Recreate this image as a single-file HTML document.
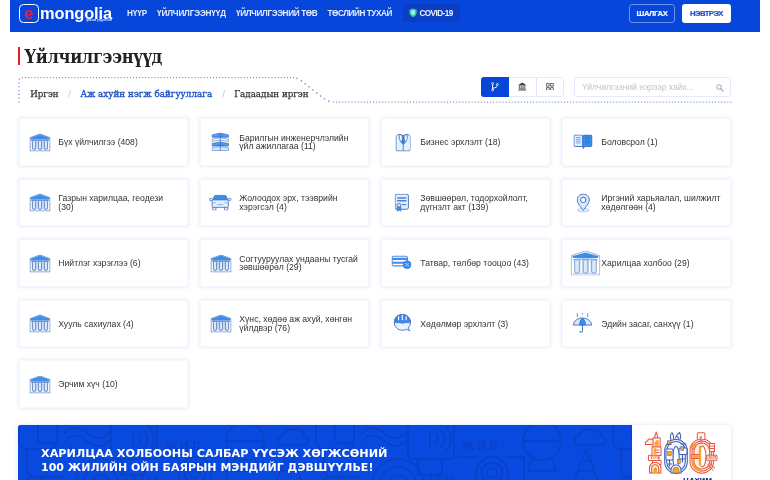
<!DOCTYPE html>
<html lang="mn">
<head>
<meta charset="utf-8">
<title>Үйлчилгээнүүд</title>
<style>
*{box-sizing:border-box;margin:0;padding:0}
html,body{width:770px;height:480px;overflow:hidden;background:#fff}
body{position:relative;font-family:"Liberation Sans",sans-serif;color:#333}
#root{position:absolute;left:0;top:0;width:770px;height:480px;overflow:hidden;will-change:transform}
.abs{position:absolute}
/* header */
#hdr{position:absolute;left:10px;top:0;width:749.5px;height:31.5px;background:#0746db}
#logo-box{position:absolute;left:8.6px;top:3.9px;width:20.2px;height:18.8px;border:1.8px solid #fff;border-radius:4.5px}
#logo-e{position:absolute;left:11.2px;top:1.6px;width:15px;text-align:center;font:bold 16.4px/22px "Liberation Sans",sans-serif;color:#e8213f}
#logo-t{position:absolute;left:30px;top:2.2px;font:bold 16.4px/22px "Liberation Sans",sans-serif;color:#fff;letter-spacing:-0.1px}
#logo-s{position:absolute;left:76px;top:18.8px;font:bold 3.1px/3.5px "Liberation Sans",sans-serif;color:#dfe6ff;white-space:nowrap;letter-spacing:0.1px}
.nav{position:absolute;top:9px;font:bold 8.2px/9px "Liberation Sans",sans-serif;color:#e4ebff;white-space:nowrap}
#covid{position:absolute;left:393px;top:4px;width:56.5px;height:18px;background:#0b3ec2;border-radius:2px}
#covid span{position:absolute;left:16.4px;top:5px;font:bold 8.2px/9px "Liberation Sans",sans-serif;color:#eef2ff;white-space:nowrap;letter-spacing:-0.54px}
#btn1{-webkit-text-stroke:0.2px #f2f5ff;position:absolute;left:619px;top:3.5px;width:46px;height:19px;border:1px solid #6d8ff0;border-radius:3px;text-align:center;font:bold 7.7px/17.4px "Liberation Sans",sans-serif;color:#f2f5ff;letter-spacing:-0.42px}
#btn2{-webkit-text-stroke:0.2px #2450cf;position:absolute;left:671.8px;top:3.5px;width:49.2px;height:19px;background:#fff;border-radius:3px;text-align:center;font:bold 7.7px/19.4px "Liberation Sans",sans-serif;color:#2450cf;letter-spacing:-0.5px}
/* title */
#tbar{position:absolute;left:18px;top:47px;width:2px;height:17.5px;background:#e0202c}
#title{position:absolute;left:24.5px;top:45px;font:bold 18px/24px "DejaVu Serif Condensed","DejaVu Serif","Liberation Serif",serif;color:#222;white-space:nowrap;letter-spacing:-0.3px}
/* tabs */
.tab{position:absolute;top:87.5px;font:9.7px/12px "DejaVu Serif Condensed","DejaVu Serif","Liberation Serif",serif;color:#333;white-space:nowrap;-webkit-text-stroke:0.25px #333}
.tab.act{color:#2355c8;-webkit-text-stroke:0.35px #2355c8;letter-spacing:0.06px}
.tab.sep{color:#b9bec9;-webkit-text-stroke:0}
/* toggles */
#tg{position:absolute;left:481px;top:77.3px;width:82.7px;height:19.5px;border:1px solid #e3ebfa;border-radius:3px;background:#fff}
#tg .on{position:absolute;left:-1px;top:-1px;width:28px;height:19.5px;background:#0746db;border-radius:3px 0 0 3px}
#tg .dv{position:absolute;left:54px;top:0;width:1px;height:17.5px;background:#dde7f8}
#srch{position:absolute;left:573.5px;top:77.3px;width:157.5px;height:19.5px;border:1px solid #e3ebfa;border-radius:3px;background:#fff}
#srch span{position:absolute;left:8px;top:4.2px;font:8.5px/10px "Liberation Sans",sans-serif;color:#bfc2c9;white-space:nowrap}
/* cards */
.card{position:absolute;width:169.5px;height:48.5px;background:#fff;border:1px solid #eef2fc;border-radius:3px;box-shadow:0 0 3.5px rgba(205,215,242,.42);transform:translate(0.5px,0.5px)}
.card .tx{position:absolute;left:38.8px;top:0;height:46.8px;width:126px;display:flex;align-items:center;font:8.65px/8.8px "Liberation Sans",sans-serif;color:#333;white-space:nowrap}
.card svg{position:absolute}
/* banner */
#ban{position:absolute;left:18.3px;top:425.3px;width:712.7px;height:60px;border-radius:3px;overflow:hidden;background:#fff;box-shadow:0 0 4px rgba(190,205,240,.6)}
#ban .bl{position:absolute;left:0;top:0;width:614.2px;height:60px;background:#084adf;overflow:hidden}
#ban .bt{position:absolute;left:22.6px;top:20.5px;font:bold 10.4px/14.1px "DejaVu Sans","Liberation Sans",sans-serif;color:#fff;white-space:nowrap}
</style>
</head>
<body>
<div id="root">
<!--ICONS-->
<svg width="0" height="0" style="position:absolute">
<defs>
<symbol id="i-bld" viewBox="0 0 21 18">
  <path d="M0.500 4.200 L10.500 0.500 L20.500 4.200 V17.500 H0.500 Z" fill="#fbfdff" stroke="#3f70ba" stroke-width="0.750" stroke-linejoin="round"/>
  <path d="M0.900 4.400 L10.500 0.900 L20.100 4.400 L19.600 6 H1.400 Z" fill="#3b8dec"/>
  <path d="M1.800 6.600 H19.200" stroke="#5c86c8" stroke-width="0.600"/>
  <path d="M2.200 6.800 Q2.900 7.200 2.900 8.300 V14.300 a1.650 1.650 0 0 0 3.300 0 V8.300 Q6.200 7.200 6.900 6.800 Z M8.150 6.800 Q8.850 7.200 8.850 8.300 V14.300 a1.650 1.650 0 0 0 3.300 0 V8.300 Q12.150 7.200 12.850 6.800 Z M14.100 6.800 Q14.800 7.200 14.800 8.300 V14.300 a1.650 1.650 0 0 0 3.300 0 V8.300 Q18.100 7.200 18.800 6.800 Z" fill="#dbe8fb" stroke="#3a68b4" stroke-width="0.800"/>
  <path d="M6.600 16.200 V9.700 a0.950 0.950 0 0 1 1.900 0 V16.200 M12.550 16.200 V9.700 a0.950 0.950 0 0 1 1.900 0 V16.200" fill="none" stroke="#6d97d6" stroke-width="0.400"/>
</symbol>
<symbol id="i-bldL" viewBox="0 0 30 25.500">
  <path d="M0.500 5.400 L15 0.400 L29.500 5.400 V25 H0.500 Z" fill="#fff" stroke="#4a78bd" stroke-width="0.600" stroke-linejoin="round"/>
  <path d="M1.600 5.900 L15 2.100 L28.400 5.900 L27.300 7.700 Q21 7.900 15.700 8.100 L15 7.500 L14.300 8.100 Q9 7.900 2.700 7.700 Z" fill="#3b8dec"/>
  <path d="M2.800 9.200 H27.200" stroke="#8ea9d3" stroke-width="0.700"/>
  <path d="M3.200 9.500 Q4.100 10 4.100 11.600 V20.700 a2.350 2.350 0 0 0 4.700 0 V11.600 Q8.800 10 9.700 9.500 Z M11.700 9.500 Q12.650 10 12.650 11.600 V20.700 a2.350 2.350 0 0 0 4.700 0 V11.600 Q17.350 10 18.300 9.500 Z M20.300 9.500 Q21.200 10 21.200 11.600 V20.700 a2.350 2.350 0 0 0 4.700 0 V11.600 Q25.900 10 26.800 9.500 Z" fill="#dce9fb" stroke="#4a78bd" stroke-width="0.650"/>
  <path d="M9.400 22.800 V13 a1.350 1.350 0 0 1 2.700 0 V22.800 M17.900 22.800 V13 a1.350 1.350 0 0 1 2.700 0 V22.800" fill="none" stroke="#7fa3da" stroke-width="0.500"/>
  <path d="M2.500 23.300 H27.500" stroke="#7fa3da" stroke-width="0.500"/>
</symbol>
<symbol id="i-bars" viewBox="0 0 17.500 18.500">
  <path d="M0.500 2.400 L8.750 0.500 L17 2.400 V4.700 H0.500 Z" fill="#3b8dec" stroke="#386ab8" stroke-width="0.600" stroke-linejoin="round"/>
  <path d="M0.600 3.600 L8.750 2.200 L16.900 3.600" fill="none" stroke="#8fc0f6" stroke-width="0.450"/>
  <path d="M0.500 6.700 L8.750 5.300 L17 6.700 V8.900 L8.750 7.700 L0.500 8.900 Z" fill="#f4f8ff" stroke="#4a7cc8" stroke-width="0.600" stroke-linejoin="round"/>
  <path d="M0.500 11 L8.750 9.400 L17 11 V13.500 H0.500 Z" fill="#3b8dec" stroke="#386ab8" stroke-width="0.600" stroke-linejoin="round"/>
  <path d="M0.600 12.300 L8.750 10.900 L16.900 12.300" fill="none" stroke="#8fc0f6" stroke-width="0.450"/>
  <path d="M0.500 15.300 L8.750 14 L17 15.300 V18 H0.500 Z" fill="#dbe8fb" stroke="#4a7cc8" stroke-width="0.600" stroke-linejoin="round"/>
  <path d="M8.750 0.500 V18" stroke="#3467b8" stroke-width="0.700"/>
</symbol>
<symbol id="i-suit" viewBox="0 0 15.500 18">
  <path d="M4.300 0.700 C2 1 0.500 2 0.500 4.500 V15.500 Q0.500 17.500 2.500 17.500 H13 Q15 17.500 15 15.500 V4.500 C15 2 13.500 1 11.200 0.700 L7.750 2.200 Z" fill="#e4efff" stroke="#3d6db8" stroke-width="0.850" stroke-linejoin="round"/>
  <path d="M4.300 0.900 C2.800 4.500 4.500 8 7.750 11 C11 8 12.700 4.500 11.200 0.900 L7.750 2.400 Z" fill="#f6f9ff" stroke="#3a6dbd" stroke-width="0.850" stroke-linejoin="round"/>
  <path d="M6.400 2.900 L9.100 2.900 L8.700 4.800 L9.500 8.700 L7.750 10.800 L6 8.700 L6.800 4.800 Z" fill="#3b7fe0" stroke="#2f62b4" stroke-width="0.500" stroke-linejoin="round"/>
  <path d="M7.750 11 V17.300" stroke="#386ab8" stroke-width="0.800"/>
</symbol>
<symbol id="i-book" viewBox="0 0 19 14.500">
  <path d="M1.800 0.500 H8 Q9.300 0.500 9.300 1.800 V12 H1.800 Q0.500 12 0.500 10.700 V1.800 Q0.500 0.500 1.800 0.500 Z" fill="#e4efff" stroke="#3a6dbd" stroke-width="0.900"/>
  <path d="M11 0.500 H17.200 Q18.500 0.500 18.500 1.800 V10.700 Q18.500 12 17.200 12 H11.300 L9.700 14 L9.300 12 V1.800 Q9.600 0.500 11 0.500 Z" fill="#3b8dec" stroke="#2f6fd0" stroke-width="0.900" stroke-linejoin="round"/>
  <path d="M2.500 3 H7.200 M2.500 4.800 H7.200 M2.500 6.600 H7.200 M2.500 8.400 H7.200" stroke="#7da6e0" stroke-width="1"/>
  <path d="M11.500 3 H16.500 M11.500 4.800 H16.500 M11.500 6.600 H16.500 M11.500 8.400 H16.500" stroke="#2f78dc" stroke-width="1"/>
</symbol>
<symbol id="i-car" viewBox="0 0 23.500 17">
  <rect x="3.800" y="12.500" width="3.400" height="4" rx="0.600" fill="#e4efff" stroke="#3d6db8" stroke-width="0.800"/>
  <rect x="16.300" y="12.500" width="3.400" height="4" rx="0.600" fill="#e4efff" stroke="#3d6db8" stroke-width="0.800"/>
  <path d="M5.200 2.200 Q5.700 0.600 7.500 0.600 H16 Q17.800 0.600 18.300 2.200 L19.700 6.500 Q20.300 7 20.300 8 V12.500 Q20.300 13.500 19.300 13.500 H4.200 Q3.200 13.500 3.200 12.500 V8 Q3.200 7 3.800 6.500 Z" fill="#e4efff" stroke="#3d6db8" stroke-width="0.850"/>
  <path d="M5.700 2.600 Q6.100 1.200 7.600 1.200 H15.900 Q17.400 1.200 17.800 2.600 L18.800 5.800 H4.700 Z" fill="#3b8dec" stroke="#2f6fd0" stroke-width="0.600"/>
  <ellipse cx="2" cy="5.200" rx="1.600" ry="1.200" fill="#e4efff" stroke="#3d6db8" stroke-width="0.800"/>
  <ellipse cx="21.500" cy="5.200" rx="1.600" ry="1.200" fill="#e4efff" stroke="#3d6db8" stroke-width="0.800"/>
  <path d="M8.500 10.600 H15 M4 8.700 H7 M16.500 8.700 H19.500" stroke="#6f9ddd" stroke-width="0.800"/>
</symbol>
<symbol id="i-cert" viewBox="0 0 15 19">
  <rect x="0.600" y="0.600" width="13.800" height="15.600" rx="1.800" fill="#e4efff" stroke="#3d6db8" stroke-width="0.950"/>
  <path d="M3.200 4.500 H11.800 M3.200 7.500 H11.800" stroke="#4c82d0" stroke-width="1.500" stroke-linecap="round"/>
  <path d="M8.500 11.500 H11.500" stroke="#4c82d0" stroke-width="1.400" stroke-linecap="round"/>
  <path d="M2.600 13 H6.600 V18.500 L4.600 17.300 L2.600 18.500 Z" fill="#3b8dec" stroke="#2f6fd0" stroke-width="0.500"/>
  <circle cx="4.600" cy="12" r="2" fill="#cfe0fb" stroke="#386ab8" stroke-width="0.800"/>
</symbol>
<symbol id="i-pin" viewBox="0 0 13.500 19">
  <ellipse cx="6.750" cy="16.800" rx="5.800" ry="1.700" fill="#e9f3ff" stroke="#8cc0f2" stroke-width="0.800"/>
  <path d="M6.750 0.600 C10.300 0.600 12.800 3.200 12.800 6.500 C12.800 10 9 13.500 6.750 17 C4.500 13.500 0.700 10 0.700 6.500 C0.700 3.200 3.200 0.600 6.750 0.600 Z" fill="#d9e8ff" stroke="#3f70b8" stroke-width="0.950" stroke-linejoin="round"/>
  <circle cx="6.750" cy="6.400" r="2.700" fill="#fff" stroke="#3f70b8" stroke-width="1"/>
</symbol>
<symbol id="i-pay" viewBox="0 0 20 13.500">
  <rect x="0.600" y="0.600" width="15.300" height="9.800" rx="1.500" fill="#fff" stroke="#2f6fd0" stroke-width="1"/>
  <path d="M0.800 2.300 H15.700 V4.600 H0.800 Z M0.800 6.200 H15.700 V8.300 H0.800 Z" fill="#3b8dec"/>
  <circle cx="15.600" cy="9.200" r="3.900" fill="#3b8dec" stroke="#2f6fd0" stroke-width="0.600"/>
  <path d="M14.300 10.600 L16.900 7.800" stroke="#fff" stroke-width="0.700"/>
  <circle cx="14.400" cy="8.100" r="0.550" fill="#fff"/><circle cx="16.800" cy="10.300" r="0.550" fill="#fff"/>
</symbol>
<symbol id="i-helm" viewBox="0 0 18.500 18.500">
  <path d="M9 1 C13.800 1 17.500 4.600 17.500 9 C17.500 11.400 16.500 13.300 15 14.800 L16.800 17.800 L13.300 16.200 C12 16.800 10.600 17.100 9 17.100 C4.300 17.100 0.700 13.500 0.700 9 C0.700 4.600 4.300 1 9 1 Z" fill="#e9f2ff" stroke="#3a6dbd" stroke-width="0.900" stroke-linejoin="round"/>
  <path d="M0.700 9.500 C0.500 4.500 4.300 0.800 9 0.800 C13.800 0.800 17.700 4.500 17.500 9.500 L14 9.500 C13 10.800 5 10.800 4 9.500 Z" fill="#3b85e6" stroke="#2f6fd0" stroke-width="0.500"/>
  <path d="M5.200 2.800 V6.800 M9.100 1.500 V6.800 M13 2.800 V6.800" stroke="#e9f2ff" stroke-width="1.300"/>
  <path d="M4.500 10 Q9.100 11.800 13.700 10" fill="none" stroke="#fff" stroke-width="0.900"/>
</symbol>
<symbol id="i-umb" viewBox="0 0 20 21">
  <path d="M4.800 0.800 V4.500 M10 0.500 V2 M15.200 0.800 V4.500" stroke="#4a86d4" stroke-width="0.900"/>
  <path d="M0.700 12.500 C1.500 8 5.500 5.500 10 5.500 C14.500 5.500 18.500 8 19.300 12.500 Z" fill="#d9e8ff" stroke="#386ab8" stroke-width="0.900" stroke-linejoin="round"/>
  <path d="M7 12.500 C7 9 8.500 6.500 10 5.500 C11.500 6.500 13 9 13 12.500 Z" fill="#3b8dec" stroke="#2f6fd0" stroke-width="0.700" stroke-linejoin="round"/>
  <path d="M10 12.500 V18.500 a1.400 1.400 0 0 1 -2.800 0" fill="none" stroke="#386ab8" stroke-width="0.900"/>
</symbol>
</defs>
</svg>
<!--/ICONS-->
<div id="hdr">
  <div id="logo-box"></div>
  <div id="logo-e">e</div>
  <div id="logo-t">mongolia</div>
  <div id="logo-s">цахим үндэстэн</div>
  <div class="nav" style="left:117px;letter-spacing:-0.05px">НҮҮР</div>
  <div class="nav" style="left:147px;letter-spacing:-0.14px">ҮЙЛЧИЛГЭЭНҮҮД</div>
  <div class="nav" style="left:226px;letter-spacing:-0.36px">ҮЙЛЧИЛГЭЭНИЙ ТӨВ</div>
  <div class="nav" style="left:317.4px;letter-spacing:-0.43px">ТӨСЛИЙН ТУХАЙ</div>
  <div id="covid">
    <svg class="abs" style="left:5.500px;top:3.800px" width="8.200" height="9.600" viewBox="0 0 17 19"><path d="M8.5 0.5 L16 3 V9 C16 14 12.5 17 8.5 18.5 C4.500 17 1 14 1 9 V3 Z" fill="#2fd3a4"/><path d="M8.5 4 L12.500 5.500 V9 C12.500 11.500 10.500 13.500 8.500 14.500 C6.500 13.500 4.500 11.500 4.500 9 V5.500 Z" fill="#a9f0dc"/></svg>
    <span>COVID-19</span>
  </div>
  <div id="btn1">ШАЛГАХ</div>
  <div id="btn2">НЭВТРЭХ</div>
</div>

<div id="tbar"></div>
<div id="title">Үйлчилгээнүүд</div>

<svg class="abs" style="left:0;top:70px" width="770" height="40" viewBox="0 70 770 40">
  <path id="dots" d="M22 77.700 H294.500 M333 102 H732" fill="none" stroke="#7f8ec6" stroke-width="1.250" stroke-dasharray="1.050 2.030"/>
  <path d="M297 78.400 Q299.500 79.500 301.500 81 L324 98.600 Q327 100.800 331 101.800" fill="none" stroke="#6f80bd" stroke-width="1.500" stroke-dasharray="0.010 4.900" stroke-linecap="round"/>
  <path d="M18.900 102.500 V81.500 Q18.900 78.500 21 78" fill="none" stroke="#7383be" stroke-width="1.300" stroke-dasharray="1.100 2.700"/>
</svg>
<div class="tab" style="left:30.2px">Иргэн</div>
<div class="tab sep" style="left:68px">/</div>
<div class="tab act" style="left:80.5px">Аж ахуйн нэгж байгууллага</div>
<div class="tab sep" style="left:222.200px">/</div>
<div class="tab" style="left:234.300px">Гадаадын иргэн</div>

<div id="tg"><div class="on"></div><div class="dv"></div>
  <svg class="abs" style="left:9.200px;top:3.800px" width="8" height="9.500" viewBox="0 0 8 9.500"><path d="M1.600 2.300 V7.200 M1.600 6.200 C4.500 6 6.300 5 6.300 3.200" fill="none" stroke="#fff" stroke-width="1"/><circle cx="1.600" cy="1.500" r="0.900" fill="none" stroke="#fff" stroke-width="0.800"/><circle cx="1.600" cy="8" r="0.900" fill="none" stroke="#fff" stroke-width="0.800"/><circle cx="6.300" cy="2.400" r="0.900" fill="none" stroke="#fff" stroke-width="0.800"/></svg>
  <svg class="abs" style="left:36.200px;top:4px" width="8.400" height="8.600" viewBox="0 0 8.400 8.600"><path d="M0.300 2.900 L4.200 0.400 L8.100 2.900 V3.500 H0.300 Z" fill="#3a3f4a"/><path d="M1.600 4 V6.600 M3.300 4 V6.600 M5.100 4 V6.600 M6.800 4 V6.600" stroke="#3a3f4a" stroke-width="0.850"/><path d="M0.800 7 H7.600 M0.200 8.100 H8.200" stroke="#3a3f4a" stroke-width="0.800"/></svg>
  <svg class="abs" style="left:64.200px;top:4.400px" width="7.800" height="7.800" viewBox="0 0 7.800 7.800"><path d="M0.500 0.500 H3.200 V3.200 H0.500 Z M4.600 0.500 H7.300 V3.200 H4.600 Z M0.500 4.600 H3.200 V7.300 H0.500 Z M4.600 4.600 H7.300 V7.300 H4.600 Z" fill="none" stroke="#4a4f5a" stroke-width="0.850"/></svg>
</div>
<div id="srch"><span>Үйлчилгээний нэрээр хайх...</span><svg class="abs" style="left:141.300px;top:5.500px" width="8" height="8" viewBox="0 0 8 8"><circle cx="3" cy="3" r="2.300" fill="none" stroke="#9a9ea8" stroke-width="0.900"/><path d="M4.700 4.700 L7.200 7.200" stroke="#9a9ea8" stroke-width="1.100" stroke-linecap="round"/></svg></div>

<div id="cards">
<div class="card" style="left:18px;top:117px"><svg style="left:10px;top:14.5px" width="21" height="18"><use href="#i-bld"/></svg><div class="tx"><span>Бүх үйлчилгээ (408)</span></div></div>
<div class="card" style="left:199px;top:117px"><svg style="left:11px;top:14px" width="17.5" height="18.5"><use href="#i-bars"/></svg><div class="tx"><span>Барилгын инженерчлэлийн<br>үйл ажиллагаа (11)</span></div></div>
<div class="card" style="left:380px;top:117px"><svg style="left:13.5px;top:14.5px" width="15.5" height="18"><use href="#i-suit"/></svg><div class="tx"><span>Бизнес эрхлэлт (18)</span></div></div>
<div class="card" style="left:561px;top:117px"><svg style="left:11.2px;top:16px" width="19" height="14.5"><use href="#i-book"/></svg><div class="tx"><span>Боловсрол (1)</span></div></div>
<div class="card" style="left:18px;top:177.5px"><svg style="left:10px;top:14.5px" width="21" height="18"><use href="#i-bld"/></svg><div class="tx"><span>Газрын харилцаа, геодези<br>(30)</span></div></div>
<div class="card" style="left:199px;top:177.5px"><svg style="left:8.1px;top:15px" width="23.5" height="16.2"><use href="#i-car"/></svg><div class="tx"><span>Жолоодох эрх, тээврийн<br>хэрэгсэл (4)</span></div></div>
<div class="card" style="left:380px;top:177.5px"><svg style="left:13.3px;top:14.2px" width="14.5" height="18.5"><use href="#i-cert"/></svg><div class="tx"><span>Зөвшөөрөл, тодорхойлолт,<br>дүгнэлт акт (139)</span></div></div>
<div class="card" style="left:561px;top:177.5px"><svg style="left:14.4px;top:14px" width="13.5" height="19"><use href="#i-pin"/></svg><div class="tx"><span>Иргэний харьяалал, шилжилт<br>хөдөлгөөн (4)</span></div></div>
<div class="card" style="left:18px;top:238px"><svg style="left:10px;top:14.5px" width="21" height="18"><use href="#i-bld"/></svg><div class="tx"><span>Нийтлэг хэрэглээ (6)</span></div></div>
<div class="card" style="left:199px;top:238px"><svg style="left:10px;top:14.5px" width="21" height="18"><use href="#i-bld"/></svg><div class="tx"><span>Согтууруулах ундааны тусгай<br>зөвшөөрөл (29)</span></div></div>
<div class="card" style="left:380px;top:238px"><svg style="left:10.4px;top:16.1px" width="20" height="13.5"><use href="#i-pay"/></svg><div class="tx"><span>Татвар, төлбөр тооцоо (43)</span></div></div>
<div class="card" style="left:561px;top:238px"><svg style="left:8px;top:10.5px" width="30" height="25.2"><use href="#i-bldL"/></svg><div class="tx"><span>Харилцаа холбоо (29)</span></div></div>
<div class="card" style="left:18px;top:298.5px"><svg style="left:10px;top:14.5px" width="21" height="18"><use href="#i-bld"/></svg><div class="tx"><span>Хууль сахиулах (4)</span></div></div>
<div class="card" style="left:199px;top:298.5px"><svg style="left:10px;top:14.5px" width="21" height="18"><use href="#i-bld"/></svg><div class="tx"><span>Хүнс, хөдөө аж ахуй, хөнгөн<br>үйлдвэр (76)</span></div></div>
<div class="card" style="left:380px;top:298.5px"><svg style="left:11.5px;top:13.7px" width="18" height="18.2"><use href="#i-helm"/></svg><div class="tx"><span>Хөдөлмөр эрхлэлт (3)</span></div></div>
<div class="card" style="left:561px;top:298.5px"><svg style="left:10.1px;top:12.2px" width="20" height="21"><use href="#i-umb"/></svg><div class="tx"><span>Эдийн засаг, санхүү (1)</span></div></div>
<div class="card" style="left:18px;top:359px"><svg style="left:10px;top:14.5px" width="21" height="18"><use href="#i-bld"/></svg><div class="tx"><span>Эрчим хүч (10)</span></div></div>
</div>

<div id="ban">
  <div class="bl">
    <svg class="abs" style="left:0;top:0" width="614" height="60" viewBox="0 0 614 60">
      <defs>
        <pattern id="bp" x="-5" y="0" width="297" height="120" patternUnits="userSpaceOnUse">
          <g fill="none" stroke="#0941cb" stroke-width="2" stroke-linecap="round" stroke-linejoin="round" opacity="1">
            <rect x="6" y="-6" width="38" height="30" rx="7"/>
            <path d="M14 24 V44 Q14 52 22 52 H50 M25 -2 V14 Q25 18 30 18 H44"/>
            <circle cx="22" cy="66" r="14"/><circle cx="22" cy="66" r="8"/>
            <path d="M52 8 Q62 -2 74 8 T96 8 M52 16 Q62 6 74 16 T96 16"/>
            <path d="M62 60 A26 26 0 0 1 114 60 M70 60 A18 18 0 0 1 106 60 M78 60 A10 10 0 0 1 98 60"/>
            <rect x="98" y="-4" width="46" height="38" rx="4"/>
            <path d="M108 34 V50 H132 V34 M120 6 V22 M126 10 Q130 14 126 18 M131 6 Q138 14 131 22 M136 2 Q146 14 136 26"/>
            <circle cx="182" cy="48" r="5"/><circle cx="182" cy="48" r="10.500"/><circle cx="182" cy="48" r="16"/>
            <path d="M148 32 H166 M198 32 H214 M214 32 V60"/>
            <circle cx="232" cy="16" r="19"/>
            <path d="M214 16 H250 M222 34 L218 46 H246 L242 34 M232 -3 V-8"/>
            <path d="M262 60 L276 24 L290 60 M268 46 H284 M272 36 H280"/>
            <path d="M266 20 Q262 12 270 10 Q272 2 281 5 Q290 2 291 11 Q298 14 293 20 Z"/>
          </g>
          <g fill="#0941cb" opacity="1" font-family="'DejaVu Sans','Liberation Sans',sans-serif" font-weight="bold">
            <text x="150" y="25" font-size="12" letter-spacing="1.500">ЖИЛ</text>
            <text x="118" y="58" font-size="9.500" letter-spacing="0.500">1921</text>
          </g>
        </pattern>
      </defs>
      <rect x="0" y="0" width="614" height="60" fill="url(#bp)"/>
    </svg>
  </div>
  <div class="bt"><span style="display:inline-block;transform-origin:0 50%;transform:scaleX(1.078)">ХАРИЛЦАА ХОЛБООНЫ САЛБАР ҮҮСЭЖ ХӨГЖСӨНИЙ</span><br><span style="display:inline-block;transform-origin:0 50%;transform:scaleX(1.058)">100 ЖИЛИЙН ОЙН БАЯРЫН МЭНДИЙГ ДЭВШҮҮЛЬЕ!</span></div>
  <div class="wp"></div>
</div>
<svg class="abs" id="l100" style="left:640px;top:428px" width="85" height="52" viewBox="640 428 85 52">
  <g fill="none" stroke="#e9573f" stroke-width="1.050" stroke-linejoin="round" stroke-linecap="round">
    <path d="M656.200 432 L658 438 H654.400 Z"/>
    <path d="M645.500 444.500 Q644.500 441.500 647.500 441 Q648.500 438 651.500 439.300 Q654 438.500 654.200 441.500 V444.500 Z" fill="#fdeeea"/>
    <rect x="653" y="438" width="7.200" height="9" fill="#fff"/>
    <rect x="652" y="447" width="9" height="8.500" fill="#fff"/>
    <rect x="652.500" y="460.500" width="8.500" height="4" fill="#fff"/>
    <path d="M649.500 473 V468 a5.700 5.700 0 0 1 11.400 0 V473 Z" fill="#fdeeea"/>
    <path d="M651.700 473 V468.300 a3.500 3.500 0 0 1 7 0 V473"/>
    <rect x="648.500" y="455.300" width="10.500" height="5.200" rx="0.800" fill="#fff"/>
    <path d="M656 441 H658.500 M654.500 450 H659 M654.500 452.500 H659"/>
  </g>
  <rect x="654.500" y="441.800" width="4.200" height="4" fill="#f6a623"/>
  <rect x="653.500" y="448.300" width="2.800" height="6" fill="#f6a623"/>
  <path d="M653.400 473 V469 a1.800 1.800 0 0 1 3.600 0 V473 Z" fill="#f6a623"/>
  <text x="650.200" y="459.400" font-family="'Liberation Sans',sans-serif" font-weight="bold" font-size="3.400" fill="#e9573f">ЗУУН</text>
  <g fill="none" stroke="#4460b5" stroke-width="1.050" stroke-linejoin="round" stroke-linecap="round">
    <path d="M671 440 Q669.500 435 672 432.500 Q674 435 673.500 440 M675.500 438 Q676.500 434 679.500 432.500 Q681.500 435.500 680 439.500 M677 436 Q678.500 437 678.500 439"/>
    <rect x="664.700" y="439.500" width="22.600" height="33.700" rx="11.300" fill="#f3f6fd"/>
    <rect x="666.700" y="441.500" width="18.600" height="29.700" rx="9.300"/>
    <ellipse cx="676" cy="457" rx="3.200" ry="10.500" fill="#fff"/>
    <rect x="666" y="449" width="7" height="11" rx="1.200" fill="#fff"/>
    <rect x="679" y="448" width="8" height="6.500" rx="1" fill="#fff"/>
    <path d="M669.500 460 V466 M682.500 454.500 V462 M668 464 H672 M680 459 H685 M666.500 444.500 H671 M681 444 H686"/>
    <path d="M671 473 V470 a5 5 0 0 1 10 0 V473 Z" fill="#fff"/>
  </g>
  <rect x="667.300" y="440.800" width="3.600" height="3.300" fill="#f6a623" stroke="#4460b5" stroke-width="0.500"/>
  <rect x="667.700" y="451.500" width="3.600" height="4.200" fill="#f6a623" stroke="#4460b5" stroke-width="0.500"/>
  <rect x="680.800" y="446.500" width="3" height="3.800" fill="#f6a623" stroke="#4460b5" stroke-width="0.500"/>
  <rect x="677.300" y="459.500" width="3.200" height="3.800" fill="#f6a623" stroke="#4460b5" stroke-width="0.500"/>
  <path d="M672.800 473 V470.300 a3.200 3.200 0 0 1 6.400 0 V473 Z" fill="#f6a623" stroke="#4460b5" stroke-width="0.500"/>
  <g fill="none" stroke="#e9573f" stroke-width="1.050" stroke-linejoin="round" stroke-linecap="round">
    <rect x="690" y="439" width="23.600" height="34.200" rx="11.800" fill="#fdf1ee"/>
    <rect x="692" y="441" width="19.600" height="30.200" rx="9.800"/>
    <rect x="694" y="443" width="15.600" height="26.200" rx="7.800"/>
    <ellipse cx="702.500" cy="456.500" rx="3.400" ry="10.500" fill="#fff"/>
    <rect x="697.300" y="432.800" width="7.600" height="7" rx="1" fill="#fff"/>
    <path d="M701 439.800 V443"/>
    <rect x="709.500" y="443.500" width="5" height="8" fill="#fff"/>
    <path d="M710.500 446 H713.500 M710.500 448.500 H713.500"/>
    <rect x="706.800" y="455.300" width="10.200" height="5" rx="0.800" fill="#fff"/>
    <path d="M708 465 L713 470 M710 463.500 L714.500 468"/>
    <rect x="692" y="454.500" width="7" height="4" fill="#fff"/>
  </g>
  <circle cx="693.500" cy="446.500" r="2.300" fill="#f6a623" stroke="#e9573f" stroke-width="0.500"/>
  <rect x="698.800" y="445.500" width="2.400" height="20" rx="1.200" fill="#f6a623"/>
  <path d="M693 461 Q693 470 702 470.500" fill="none" stroke="#f6a623" stroke-width="2.200"/>
  <rect x="692.600" y="455.200" width="5.800" height="2.600" fill="#f6a623"/>
  <text x="699.200" y="438.700" font-family="'Liberation Sans',sans-serif" font-weight="bold" font-size="5.500" fill="#e9573f">e</text>
  <text x="708.300" y="459.200" font-family="'Liberation Sans',sans-serif" font-weight="bold" font-size="3.400" fill="#e9573f">ЖИЛ</text>
  <text x="682.900" y="482.700" font-family="'DejaVu Sans','Liberation Sans',sans-serif" font-weight="bold" font-size="7" fill="#1b2f8f" letter-spacing="-0.200">ЦАХИМ</text>
</svg>
</div>
</body>
</html>
